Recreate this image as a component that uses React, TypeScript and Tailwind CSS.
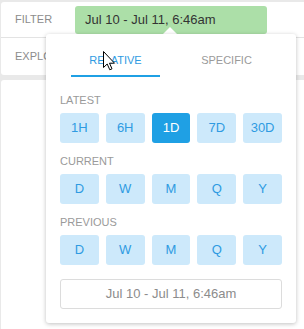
import { useState } from "react";

/* Date-range filter bar with the relative-range popover open */

const LATEST = ["1H", "6H", "1D", "7D", "30D"];
const PERIODS = ["D", "W", "M", "Q", "Y"];

function RangeRow({ items, active }: { items: string[]; active?: string }) {
  return (
    <div className="grid grid-cols-5 gap-[7px]">
      {items.map((it) => (
        <button
          key={it}
          type="button"
          className={
            it === active
              ? "h-[30px] rounded-[3px] bg-[#1fa0e4] text-[13px] text-white"
              : "h-[30px] rounded-[3px] bg-[#cde9fb] text-[13px] text-[#2f9be2]"
          }
        >
          {it}
        </button>
      ))}
    </div>
  );
}

function Label({ children }: { children: string }) {
  return (
    <p className="mb-[6px] text-[11px] leading-[13px] text-[#9a9a9a]">
      {children}
    </p>
  );
}

export default function App() {
  const [tab, setTab] = useState<"relative" | "specific">("relative");

  return (
    <div
      className="relative h-[329px] w-[304px] overflow-hidden bg-[#e9e9e9]"
      style={{ fontFamily: '"Liberation Sans", Arial, sans-serif' }}
    >
      <div className="pl-[1px] pt-[2px]">
        {/* ── Filter card ── */}
        <div className="flex h-[73px] flex-col rounded-l-[3px] bg-white">
          <div className="flex h-[36px] shrink-0 items-center border-b border-[#e3e3e3] pl-[14px]">
            <span className="w-[60px] text-[11px] text-[#8c8c8c]">FILTER</span>
            <div className="flex h-[28px] w-[192px] items-center rounded-[3px] bg-[#acdfa8] pl-[10px] text-[13px] text-[#333]">
              Jul 10 - Jul 11, 6:46am
            </div>
          </div>
          <div className="flex flex-1 items-center pl-[14px]">
            <span className="text-[11px] text-[#8c8c8c]">EXPLORE</span>
          </div>
        </div>

        {/* ── Content card ── */}
        <div className="mt-[5px] h-[260px] rounded-l-[3px] bg-white" />
      </div>

      {/* caret */}
      <div className="absolute left-[163px] top-[27px] h-0 w-0 border-x-[7px] border-b-[7px] border-x-transparent border-b-white" />

      {/* ── Popover ── */}
      <div className="absolute left-[46px] top-[34px] w-[250px] rounded-[3px] bg-white px-[14px] pb-[14px] shadow-[0_1px_4px_rgba(0,0,0,0.25)]">
        <div className="flex">
          {(["relative", "specific"] as const).map((t) => (
            <button
              key={t}
              type="button"
              onClick={() => setTab(t)}
              className="flex-1"
            >
              <span
                className={
                  tab === t
                    ? "block pb-[8px] pt-[20px] text-[11px] leading-[13px] text-[#2f9be2]"
                    : "block pb-[8px] pt-[20px] text-[11px] leading-[13px] text-[#9a9a9a]"
                }
              >
                {t.toUpperCase()}
              </span>
              <span
                className={
                  tab === t
                    ? "mx-[11px] block h-[2px] bg-[#1fa0e4]"
                    : "mx-[11px] block h-[2px]"
                }
              />
            </button>
          ))}
        </div>

        <div className="mt-[17px]">
          <Label>LATEST</Label>
          <RangeRow items={LATEST} active="1D" />
        </div>
        <div className="mt-[12px]">
          <Label>CURRENT</Label>
          <RangeRow items={PERIODS} />
        </div>
        <div className="mt-[12px]">
          <Label>PREVIOUS</Label>
          <RangeRow items={PERIODS} />
        </div>

        <div className="mt-[14px] flex h-[30px] items-center justify-center rounded-[3px] border border-[#dcdcdc] text-[13px] text-[#8c8c8c]">
          Jul 10 - Jul 11, 6:46am
        </div>
      </div>

      {/* mouse pointer */}
      <svg
        className="absolute left-[103px] top-[51px]"
        width="13"
        height="20"
        viewBox="0 0 13 20"
      >
        <path
          d="M0.5 0.5 L0.5 16.5 L4.2 13 L6.8 18.8 L9 17.8 L6.5 12.2 L11.5 12.2 Z"
          fill="#fff"
          stroke="#000"
          strokeWidth="1"
          strokeLinejoin="round"
        />
      </svg>
    </div>
  );
}
